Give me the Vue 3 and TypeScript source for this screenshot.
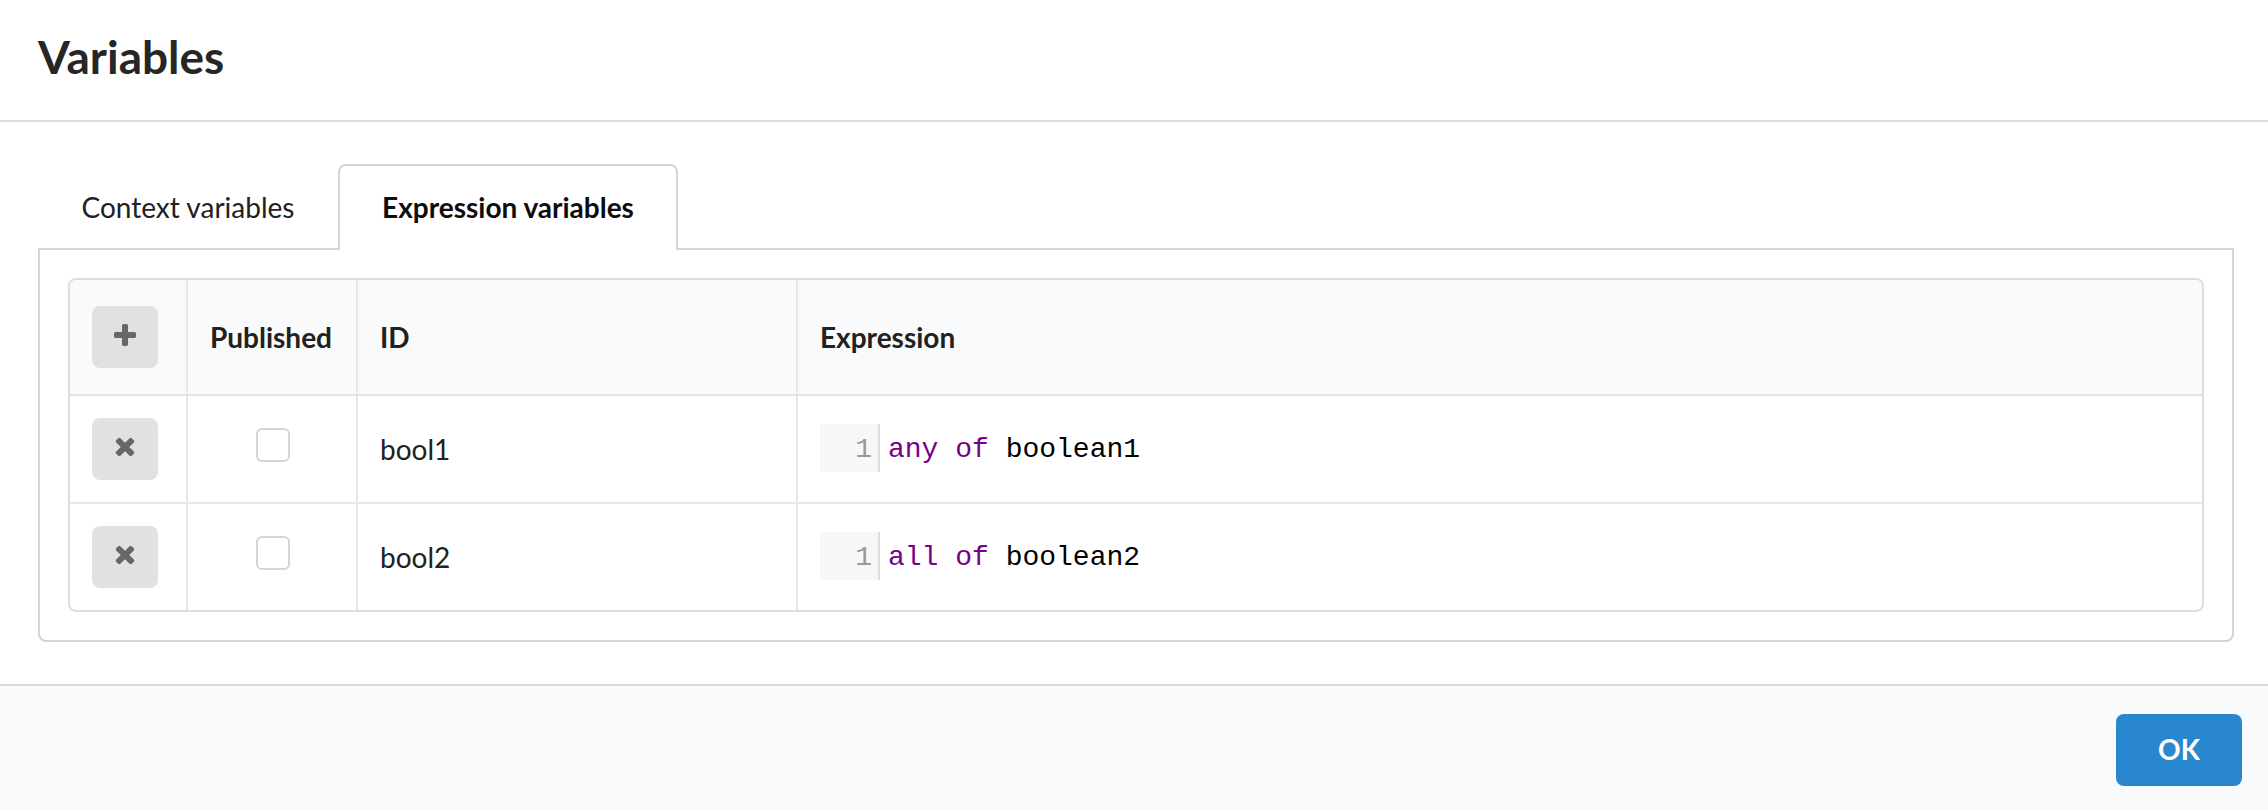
<script setup lang="ts">
import { ref } from 'vue'

interface ExpressionVariable {
  id: string
  keywords: string
  operand: string
  published: boolean
}

const tabs = ['Context variables', 'Expression variables']
const activeTab = ref(1)

const variables = ref<ExpressionVariable[]>([
  { id: 'bool1', keywords: 'any of', operand: 'boolean1', published: false },
  { id: 'bool2', keywords: 'all of', operand: 'boolean2', published: false },
])

function addVariable() {
  const next = variables.value.length + 1
  variables.value.push({ id: `bool${next}`, keywords: 'any of', operand: `boolean${next}`, published: false })
}

function removeVariable(index: number) {
  variables.value.splice(index, 1)
}
</script>

<template>
  <div class="modal" role="dialog" aria-labelledby="modal-title">
    <header class="modal-header">
      <h1 id="modal-title" class="title">Variables</h1>
    </header>

    <main class="content">
      <div class="tabs" role="tablist">
        <button
          v-for="(tab, i) in tabs"
          :key="tab"
          type="button"
          role="tab"
          class="tab"
          :class="{ active: i === activeTab }"
          :aria-selected="i === activeTab"
          @click="activeTab = i"
        >{{ tab }}</button>
      </div>

      <section class="panel" role="tabpanel">
        <table class="grid">
          <colgroup>
            <col class="col-action" />
            <col class="col-published" />
            <col class="col-id" />
            <col />
          </colgroup>
          <thead>
            <tr>
              <th scope="col">
                <button type="button" class="icon-button" aria-label="Add variable" @click="addVariable">
                  <svg class="icon" viewBox="0 -64 1792 1792" aria-hidden="true">
                    <path d="M1600 736v192q0 40-28 68t-68 28h-416v416q0 40-28 68t-68 28h-192q-40 0-68-28t-28-68v-416h-416q-40 0-68-28t-28-68v-192q0-40 28-68t68-28h416v-416q0-40 28-68t68-28h192q40 0 68 28t28 68v416h416q40 0 68 28t28 68z" />
                  </svg>
                </button>
              </th>
              <th scope="col">Published</th>
              <th scope="col">ID</th>
              <th scope="col">Expression</th>
            </tr>
          </thead>
          <tbody>
            <tr v-for="(variable, i) in variables" :key="variable.id">
              <td>
                <button type="button" class="icon-button" :aria-label="`Remove ${variable.id}`" @click="removeVariable(i)">
                  <svg class="icon" viewBox="0 64 1792 1792" aria-hidden="true">
                    <path d="M1490 1322q0 40-28 68l-136 136q-28 28-68 28t-68-28l-294-294-294 294q-28 28-68 28t-68-28l-136-136q-28-28-28-68t28-68l294-294-294-294q-28-28-28-68t28-68l136-136q28-28 68-28t68 28l294 294 294-294q28-28 68-28t68 28l136 136q28 28 28 68t-28 68l-294 294 294 294q28 28 28 68z" />
                  </svg>
                </button>
              </td>
              <td class="published">
                <input v-model="variable.published" type="checkbox" class="checkbox" :aria-label="`Publish ${variable.id}`" />
              </td>
              <td>{{ variable.id }}</td>
              <td class="expression">
                <div class="editor">
                  <span class="gutter">1</span>
                  <code class="code"><span class="keyword">{{ variable.keywords }}</span> {{ variable.operand }}</code>
                </div>
              </td>
            </tr>
          </tbody>
        </table>
      </section>
    </main>

    <footer class="actions">
      <button type="button" class="ok">OK</button>
    </footer>
  </div>
</template>

<style>
body {
  margin: 0;
}
</style>

<style scoped>
.modal {
  box-sizing: border-box;
  display: flex;
  flex-direction: column;
  min-height: 100vh;
  background: #fff;
  color: #212121;
  font: 28px/40px Lato, "Liberation Sans", sans-serif;
}

.modal *,
.modal *::before {
  box-sizing: border-box;
}

.modal-header {
  padding: 27px 38px 33px;
  border-bottom: 2px solid #dcddde;
}

.title {
  margin: 0;
  color: #262626;
  font-size: 46px;
  line-height: 60px;
  font-weight: 700;
}

.content {
  padding: 42px 34px 42px 38px;
}

.tabs {
  display: flex;
  margin-bottom: -2px;
}

.tab {
  position: relative;
  min-width: 300px;
  height: 86px;
  margin: 0;
  padding: 0 40px 2px;
  border: 2px solid transparent;
  border-bottom: 0;
  border-radius: 8px 8px 0 0;
  background: none;
  color: #212121;
  font: inherit;
  white-space: nowrap;
  cursor: pointer;
}

.tab.active {
  min-width: 340px;
  border-color: #d4d4d5;
  background: #fff;
  color: #0d0d0d;
  font-weight: 700;
}

.panel {
  padding: 28px;
  border: 2px solid #d4d4d5;
  border-radius: 0 0 8px 8px;
}

.grid {
  width: 100%;
  table-layout: fixed;
  border: 2px solid #dcddde;
  border-radius: 8px;
  border-collapse: separate;
  border-spacing: 0;
  overflow: hidden;
}

.col-action {
  width: 116px;
}

.col-published {
  width: 170px;
}

.col-id {
  width: 440px;
}

th,
td {
  padding: 22px;
  text-align: left;
  vertical-align: middle;
}

th {
  padding-block: 26px;
  border-bottom: 2px solid #e3e4e5;
  background: #f9fafb;
  font-weight: 700;
}

th + th,
td + td {
  border-left: 2px solid #e8e8e9;
}

tbody tr + tr td {
  border-top: 2px solid #e8e8e9;
}

.icon-button {
  display: flex;
  align-items: center;
  justify-content: center;
  width: 66px;
  height: 62px;
  padding: 0 0 4px;
  border: 0;
  border-radius: 8px;
  background: #e0e1e2;
  color: #666768;
  cursor: pointer;
}

.icon {
  width: 28px;
  height: 28px;
  fill: currentColor;
}

.published {
  padding: 18px 22px 26px 24px;
}

.checkbox {
  display: block;
  width: 34px;
  height: 34px;
  margin: 0 auto;
  appearance: none;
  border: 2px solid #d4d4d5;
  border-radius: 6px;
  background: #fff;
}

.checkbox:checked {
  background: #2185d0;
}

.expression {
  padding-bottom: 24px;
}

.editor {
  display: flex;
  color: #000;
  font-family: Courier, "Courier New", "Liberation Mono", monospace;
  line-height: 44px;
}

.gutter {
  width: 60px;
  padding: 4px 6px 0 0;
  border-right: 2px solid #ddd;
  background: #f7f7f7;
  color: #999;
  text-align: right;
}

.code {
  padding: 4px 0 0 8px;
  font: inherit;
}

.keyword {
  color: #708;
}

.actions {
  display: flex;
  flex: 1;
  align-items: flex-start;
  justify-content: flex-end;
  padding: 28px 26px 24px;
  border-top: 2px solid #dadbdc;
  background: #f9fafb;
}

.ok {
  min-width: 126px;
  height: 72px;
  padding: 0 40px 2px;
  border: 0;
  border-radius: 8px;
  background: #2987cf;
  color: #fff;
  font: inherit;
  font-weight: 700;
  cursor: pointer;
}
</style>
